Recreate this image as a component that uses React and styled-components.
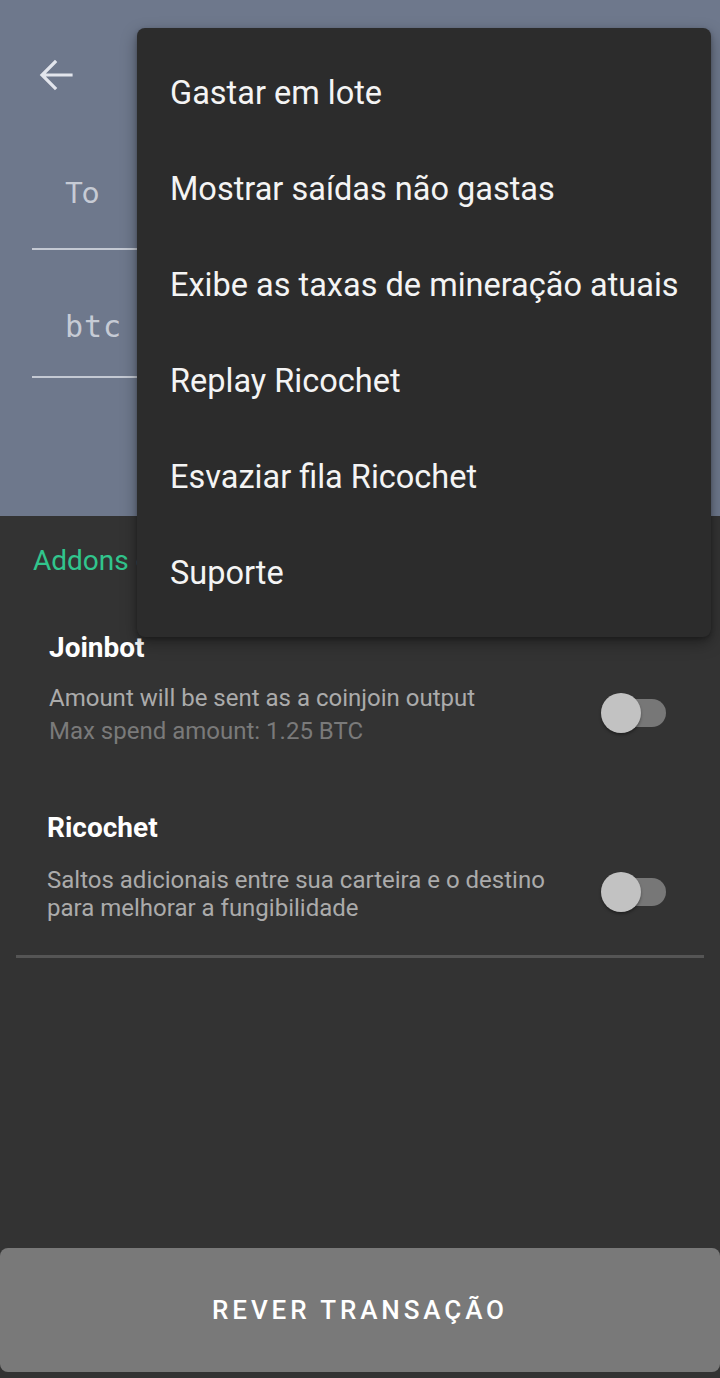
import React from "react";
import styled, { createGlobalStyle } from "styled-components";

const GlobalStyle = createGlobalStyle`
  html, body {
    margin: 0;
    padding: 0;
    background: #333333;
  }
  * { box-sizing: border-box; }
`;

const menuItems = [
  "Gastar em lote",
  "Mostrar saídas não gastas",
  "Exibe as taxas de mineração atuais",
  "Replay Ricochet",
  "Esvaziar fila Ricochet",
  "Suporte",
];

const BackArrow = () => (
  <svg width="36" height="36" viewBox="0 0 36 36" fill="none">
    <path
      d="M33 18H5M17 5L4 18l13 13"
      stroke="#e2e5ec"
      strokeWidth="3.2"
      strokeLinecap="square"
    />
  </svg>
);

const App = () => {
  return (
    <Screen>
      <GlobalStyle />
      <TopPanel>
        <Header>
          <IconButton>
            <BackArrow />
          </IconButton>
        </Header>
        <Field top={26} bottom={38}>
          <FieldLabel>To</FieldLabel>
        </Field>
        <Field top={60} bottom={32}>
          <FieldLabel mono>btc</FieldLabel>
        </Field>
      </TopPanel>

      <Body>
        <SectionTitle>Addons disponíveis</SectionTitle>

        <Addon inset={49} gap={56}>
          <AddonTitle>Joinbot</AddonTitle>
          <AddonRow>
            <AddonText>
              <Desc lh={33}>Amount will be sent as a coinjoin output</Desc>
              <Desc lh={33} muted>Max spend amount: 1.25 BTC</Desc>
            </AddonText>
            <Toggle>
              <Track />
              <Thumb />
            </Toggle>
          </AddonRow>
        </Addon>

        <Addon inset={47} gap={64}>
          <AddonTitle>Ricochet</AddonTitle>
          <AddonRow top={22}>
            <AddonText>
              <Desc lh={28}>
                Saltos adicionais entre sua carteira e o destino para melhorar a
                fungibilidade
              </Desc>
            </AddonText>
            <Toggle>
              <Track />
              <Thumb />
            </Toggle>
          </AddonRow>
        </Addon>

        <Divider />
        <Spacer />
        <ReviewButton>REVER TRANSAÇÃO</ReviewButton>
      </Body>

      <Menu>
        {menuItems.map((item) => (
          <MenuItem key={item}>{item}</MenuItem>
        ))}
      </Menu>
    </Screen>
  );
};

const Screen = styled.div`
  position: relative;
  width: 720px;
  min-height: 1378px;
  display: flex;
  flex-direction: column;
  font-family: Roboto, "Noto Sans", sans-serif;
  background: #333333;
  overflow: hidden;
`;

const TopPanel = styled.div`
  height: 516px;
  background: #6e788c;
  display: flex;
  flex-direction: column;
`;

const Header = styled.div`
  height: 150px;
  display: flex;
  align-items: center;
  padding-left: 38px;
`;

const IconButton = styled.div`
  display: flex;
  align-items: center;
  justify-content: center;
  width: 36px;
  height: 36px;
`;

const Field = styled.div`
  margin: 0 32px;
  padding: ${(p) => p.top}px 0 ${(p) => p.bottom}px 33px;
  border-bottom: 2px solid #c4c9d3;
`;

const FieldLabel = styled.div`
  line-height: 34px;
  height: 34px;
  font-size: 30px;
  font-family: ${(p) =>
    p.mono ? '"DejaVu Sans Mono", "Liberation Mono", monospace' : "Roboto, sans-serif"};
  color: #c6cbd5;
  letter-spacing: ${(p) => (p.mono ? "1px" : "0.5px")};
`;

const Body = styled.div`
  flex: 1;
  display: flex;
  flex-direction: column;
  padding-top: 30px;
`;

const SectionTitle = styled.div`
  padding-left: 33px;
  font-size: 28px;
  line-height: 30px;
  color: #31c58d;
`;

const Addon = styled.div`
  padding-left: ${(p) => p.inset}px;
  padding-right: 54px;
  margin-top: ${(p) => p.gap}px;
`;

const AddonTitle = styled.div`
  font-size: 28px;
  font-weight: 700;
  line-height: 32px;
  color: #ffffff;
`;

const AddonRow = styled.div`
  display: flex;
  align-items: center;
  justify-content: space-between;
  margin-top: ${(p) => p.top ?? 18}px;
`;

const AddonText = styled.div`
  max-width: 520px;
`;

const Desc = styled.div`
  font-size: 24px;
  line-height: ${(p) => p.lh}px;
  color: ${(p) => (p.muted ? "#7a7a7a" : "#ababab")};
`;

const Toggle = styled.div`
  position: relative;
  width: 65px;
  height: 40px;
  flex-shrink: 0;
  margin-top: -4px;
`;

const Track = styled.div`
  position: absolute;
  left: 5px;
  right: 0;
  top: 6px;
  height: 28px;
  border-radius: 14px;
  background: #777777;
`;

const Thumb = styled.div`
  position: absolute;
  left: 0;
  top: 0;
  width: 40px;
  height: 40px;
  border-radius: 50%;
  background: #c2c2c2;
  box-shadow: 0 2px 3px rgba(0, 0, 0, 0.35);
`;

const Divider = styled.div`
  margin: 33px 16px 0;
  height: 3px;
  background: #555555;
`;

const Spacer = styled.div`
  flex: 1;
`;

const ReviewButton = styled.div`
  height: 124px;
  margin-bottom: 6px;
  border-radius: 8px;
  background: #797979;
  display: flex;
  align-items: center;
  justify-content: center;
  color: #ffffff;
  font-size: 26px;
  font-weight: 500;
  letter-spacing: 3.9px;
`;

const Menu = styled.div`
  position: absolute;
  top: 28px;
  left: 137px;
  width: 574px;
  padding: 17px 0 16px;
  background: #2c2c2c;
  border-radius: 8px;
  box-shadow: 0 6px 16px rgba(0, 0, 0, 0.35), 0 2px 4px rgba(0, 0, 0, 0.25);
`;

const MenuItem = styled.div`
  height: 96px;
  display: flex;
  align-items: center;
  padding-left: 33px;
  font-size: 32.5px;
  color: #f4f4f4;
  white-space: nowrap;
`;

export default App;
